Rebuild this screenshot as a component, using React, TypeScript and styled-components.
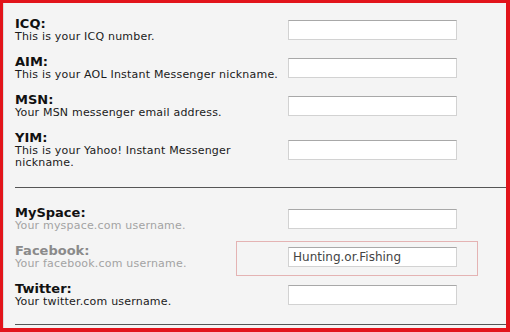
import React from 'react';
import styled, { createGlobalStyle } from 'styled-components';

const GlobalStyle = createGlobalStyle`
  html, body {
    margin: 0;
    padding: 0;
    background: #f4f4f4;
  }
  body {
    font-family: "DejaVu Sans", Verdana, sans-serif;
  }
`;

const messengers = [
  { title: 'ICQ', desc: 'This is your ICQ number.' },
  { title: 'AIM', desc: 'This is your AOL Instant Messenger nickname.' },
  { title: 'MSN', desc: 'Your MSN messenger email address.' },
  { title: 'YIM', desc: 'This is your Yahoo! Instant Messenger nickname.' },
];

const social = [
  { title: 'MySpace', desc: 'Your myspace.com username.', value: '', faded: false, fadedDesc: true },
  { title: 'Facebook', desc: 'Your facebook.com username.', value: 'Hunting.or.Fishing', faded: true, fadedDesc: true },
  { title: 'Twitter', desc: 'Your twitter.com username.', value: '', faded: false, fadedDesc: false },
];

const Frame = styled.div`
  position: relative;
  box-sizing: border-box;
  width: 510px;
  height: 332px;
  border-style: solid;
  border-color: #e2141b;
  border-width: 3px 4px 4px 3px;
  background: #f4f4f4;
  overflow: hidden;
`;

const Panel = styled.div`
  height: 100%;
  border-left: 1px solid #dcdcdc;
  padding-left: 11px;
`;

const Section = styled.div`
  display: flex;
  flex-direction: column;
  gap: 12px;
  padding: ${props => props.$pad};
  border-bottom: 1px solid #555;
`;

const Row = styled.div`
  display: grid;
  grid-template-columns: 273px 169px;
  align-items: center;
`;

const TextCol = styled.div`
  display: flex;
  flex-direction: column;
`;

const Label = styled.div`
  font-weight: bold;
  font-size: 13px;
  line-height: 14px;
  color: ${props => (props.$faded ? '#8a8a8a' : '#111')};
`;

const Desc = styled.div`
  font-size: 11px;
  letter-spacing: 0.2px;
  line-height: 12px;
  color: ${props => (props.$faded ? '#a3a3a3' : '#1a1a1a')};
  padding-right: 5px;
`;

const Field = styled.input`
  box-sizing: border-box;
  width: 169px;
  height: 20px;
  margin: 0;
  padding: 0 4px;
  background: #fff;
  border: 1px solid #d2d2d2;
  border-top-color: #a8a8a8;
  font-family: "DejaVu Sans", Verdana, sans-serif;
  font-size: 12px;
  color: #444;
  outline: none;
`;

const Watermark = styled.div`
  position: absolute;
  left: 233px;
  top: 238px;
  width: 240px;
  height: 33px;
  border: 1px solid #e4b3b3;
  pointer-events: none;
`;

const App: React.FC = () => {
  return (
    <>
      <GlobalStyle />
      <Frame>
        <Panel>
          <Section $pad="14px 0 18px">
            {messengers.map((m, index) => (
              <Row key={index}>
                <TextCol>
                  <Label>{m.title}:</Label>
                  <Desc>{m.desc}</Desc>
                </TextCol>
                <Field type="text" defaultValue="" />
              </Row>
            ))}
          </Section>
          <Section $pad="18px 0 16px">
            {social.map((s, index) => (
              <Row key={index}>
                <TextCol>
                  <Label $faded={s.faded}>{s.title}:</Label>
                  <Desc $faded={s.fadedDesc}>{s.desc}</Desc>
                </TextCol>
                <Field type="text" defaultValue={s.value} />
              </Row>
            ))}
          </Section>
        </Panel>
        <Watermark />
      </Frame>
    </>
  );
};

export default App;
